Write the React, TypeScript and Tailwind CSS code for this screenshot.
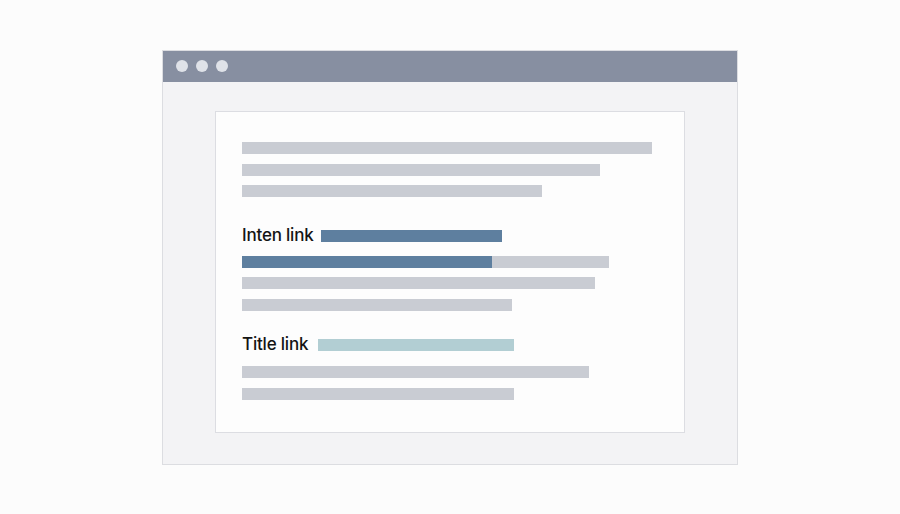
const font = { fontFamily: '"Liberation Sans", Arial, sans-serif' };
const labelFont = { fontFamily: 'Inter, "Liberation Sans", Arial, sans-serif' };

function Bar({ w, className = 'bg-[#c9ccd3]' }: { w: string; className?: string }) {
  return <div className={`h-3 ${w} ${className}`} />;
}

function Heading({ label, labelW, barW, barColor }: { label: string; labelW: string; barW: string; barColor: string }) {
  return (
    <div className="flex h-3 items-center">
      <span className={`${labelW} whitespace-nowrap text-[17px] font-medium leading-none tracking-[-0.2px] text-[#141414]`} style={labelFont}>
        {label}
      </span>
      <Bar w={barW} className={barColor} />
    </div>
  );
}

export default function App() {
  return (
    <div className="flex h-[514px] w-[900px] items-center justify-center bg-[#fcfcfc]" style={font}>
      <div className="flex h-[415px] w-[576px] flex-col border border-[#dcdde1] bg-[#f3f3f5]">
        {/* title bar */}
        <div className="flex h-[31px] items-center gap-2 bg-[#878fa1] pl-[13px]">
          <span className="h-3 w-3 rounded-full bg-[#dfe2e8]" />
          <span className="h-3 w-3 rounded-full bg-[#dfe2e8]" />
          <span className="h-3 w-3 rounded-full bg-[#dfe2e8]" />
        </div>

        <div className="flex flex-1 px-[52px] pt-[29px] pb-[31px]">
          <div className="flex flex-1 flex-col border border-[#dcdde2] bg-[#fdfdfd] pl-[26px] pt-[30px]">
            <Bar w="w-[410px]" />
            <div className="mt-[10px]"><Bar w="w-[358px]" /></div>
            <div className="mt-[9px]"><Bar w="w-[300px]" /></div>

            <div className="mt-[33px]">
              <Heading label="Inten link" labelW="w-[79px]" barW="w-[181px]" barColor="bg-[#5e7f9f]" />
            </div>
            <div className="mt-[14px] flex w-[367px] bg-[#c9ccd3]">
              <Bar w="w-[250px]" className="bg-[#5e7f9f]" />
            </div>
            <div className="mt-[9px]"><Bar w="w-[353px]" /></div>
            <div className="mt-[10px]"><Bar w="w-[270px]" /></div>

            <div className="mt-[28px]">
              <Heading label="Title link" labelW="w-[76px]" barW="w-[196px]" barColor="bg-[#b2ced3]" />
            </div>
            <div className="mt-[15px]"><Bar w="w-[347px]" /></div>
            <div className="mt-[10px]"><Bar w="w-[272px]" /></div>
          </div>
        </div>
      </div>
    </div>
  );
}
